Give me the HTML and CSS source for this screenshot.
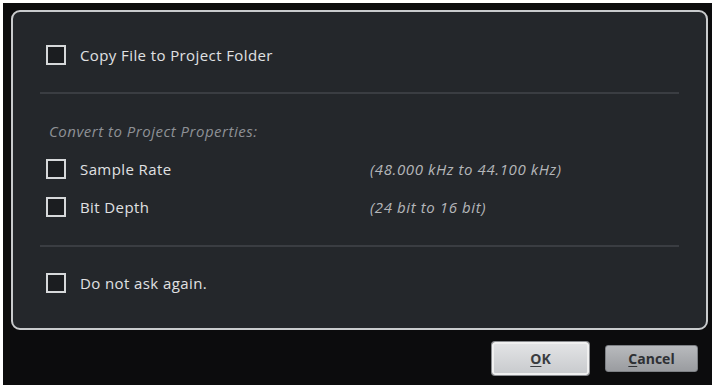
FILE: index.html
```html
<!DOCTYPE html>
<html>
<head>
<meta charset="utf-8">
<link rel="stylesheet" href="styles.css">
</head>
<body>
<div class="dialog">
  <div class="panel">
    <div class="row first">
      <span class="check"></span>
      <span class="label">Copy File to Project Folder</span>
    </div>
    <div class="sep"></div>
    <div class="heading">Convert to Project Properties:</div>
    <div class="row r-sample">
      <span class="check"></span>
      <span class="label">Sample Rate</span>
      <span class="value">(48.000 kHz to 44.100 kHz)</span>
    </div>
    <div class="row r-bit">
      <span class="check"></span>
      <span class="label">Bit Depth</span>
      <span class="value">(24 bit to 16 bit)</span>
    </div>
    <div class="sep sep2"></div>
    <div class="row r-ask">
      <span class="check"></span>
      <span class="label">Do not ask again.</span>
    </div>
  </div>
  <div class="buttons">
    <button class="btn ok"><u>O</u>K</button>
    <button class="btn cancel"><u>C</u>ancel</button>
  </div>
</div>
</body>
</html>
```
FILE: styles.css
```css
html, body {
  margin: 0;
  padding: 0;
  background: #ffffff;
}
body {
  font-family: "Open Sans", "Liberation Sans", sans-serif;
}
.dialog {
  margin: 3px 0 0 3px;
  width: 709px;
  height: 382px;
  background: #0c0c0d;
  box-sizing: border-box;
  padding: 7px 4px 0 8px;
  display: flex;
  flex-direction: column;
}
.panel {
  width: 697px;
  height: 320px;
  box-sizing: border-box;
  border: 2px solid #c9cbcd;
  border-radius: 9px;
  background: #24272b;
  padding: 33px 27px 0 33px;
  display: flex;
  flex-direction: column;
}
.row {
  display: flex;
  align-items: center;
  height: 20px;
}
.check {
  width: 20px;
  height: 20px;
  box-sizing: border-box;
  border: 2px solid #d6d8da;
  background: #1b1d20;
  margin-right: 14px;
  flex: none;
}
.label {
  width: 290px;
  flex: none;
  color: #e0e1e3;
  font-size: 15px;
  letter-spacing: 0.4px;
  line-height: 20px;
}
.value {
  color: #b4b6b9;
  font-style: italic;
  font-size: 15px;
  letter-spacing: 0.6px;
  line-height: 20px;
}
.sep {
  height: 2px;
  background: #3a3d42;
  margin: 27px 0 0 -6px;
}
.heading {
  margin: 27px 0 0 3px;
  color: #8e9196;
  font-style: italic;
  font-size: 15px;
  letter-spacing: 0.5px;
  line-height: 20px;
}
.r-sample { margin-top: 18px; }
.r-bit { margin-top: 18px; }
.sep2 { margin-top: 28px; }
.r-ask { margin-top: 26px; }
.buttons {
  display: flex;
  justify-content: flex-end;
  align-items: center;
  gap: 16px;
  padding: 12px 10px 0 0;
}
.btn {
  font-family: "Open Sans", "Liberation Sans", sans-serif;
  font-weight: 700;
  font-size: 14px;
  color: #3a3c40;
  border-radius: 3px;
  padding: 0;
  cursor: default;
}
.btn u { text-underline-offset: 2px; }
.ok {
  width: 97px;
  height: 33px;
  background: linear-gradient(#e2e3e5, #c9cbce);
  border: 2px solid #f0f0f0;
  box-shadow: 0 0 0 1px #8a8c90;
}
.cancel {
  width: 93px;
  height: 27px;
  background: linear-gradient(#b8babd, #9a9ca0);
  border: 1px solid #7d8084;
  color: #2e3034;
}
```
